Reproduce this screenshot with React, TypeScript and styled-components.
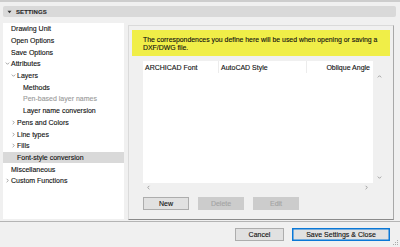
import styled, { createGlobalStyle } from "styled-components";

const GlobalStyle = createGlobalStyle`
    html, body {
        margin: 0;
        padding: 0;
        background: #f0f0f0;
    }
    body {
        font-family: "Liberation Sans", Arial, sans-serif;
        font-size: 7px;
        color: #111;
        -webkit-text-stroke: 0.12px currentColor;
    }
`;

const Window = styled.div`
    width: 400px;
    height: 247px;
    box-sizing: border-box;
    border-top: 2px solid #cdcdcd;
    background: #f0f0f0;
    display: flex;
    flex-direction: column;
    overflow: hidden;
`;

const Header = styled.div`
    margin: 4px 4px 0 3px;
    height: 11px;
    background: #d9d9d9;
    border-radius: 2px;
    display: flex;
    align-items: center;
    gap: 4px;
    padding-left: 4px;
    font-size: 6px;
    font-weight: bold;
    color: #2a2a2a;
    letter-spacing: 0.1px;
`;

const Body = styled.div`
    display: grid;
    grid-template-columns: 121px 266px;
    column-gap: 4px;
    margin: 6px 0 0 3px;
    height: 197px;
`;

const Tree = styled.div`
    background: #ffffff;
    height: 196px;
`;

const Row = styled.div<{ $level: number; $selected?: boolean; $muted?: boolean }>`
    height: 11.7px;
    display: flex;
    align-items: center;
    padding-left: ${(p) => 2 + p.$level * 6}px;
    background: ${(p) => (p.$selected ? "#d9d9d9" : "transparent")};
    color: ${(p) => (p.$muted ? "#9b9b9b" : "#111")};
    white-space: nowrap;
`;

const ArrowSlot = styled.span`
    width: 6px;
    height: 6px;
    display: flex;
    align-items: center;
    justify-content: flex-start;
`;

const Pane = styled.div`
    margin-top: 2px;
    height: 195px;
    box-sizing: border-box;
    border: 1px solid #dadada;
    border-right-color: #a8a8a8;
    border-bottom-color: #8a8a8a;
    padding: 4px 3px 0 3px;
    display: flex;
    flex-direction: column;
`;

const Note = styled.div`
    background: #f0ee48;
    height: 26px;
    box-sizing: border-box;
    padding: 6px 8px 0 11px;
    line-height: 7.5px;
    font-size: 6.9px;
    color: #111;
`;

const Grid = styled.div`
    margin: 5px 5px 0 11px;
    display: grid;
    grid-template-columns: 230px 12px;
    grid-template-rows: 122px 9px;
`;

const Table = styled.div`
    background: #ffffff;
`;

const HeadRow = styled.div`
    display: grid;
    grid-template-columns: 76px 88px 66px;
    height: 12px;
`;

const HeadCell = styled.div<{ $right?: boolean }>`
    display: flex;
    align-items: center;
    justify-content: ${(p) => (p.$right ? "flex-end" : "flex-start")};
    padding: 0 3px 0 2px;
    border-right: 1px solid #ececec;
    &:last-child {
        border-right: none;
    }
`;

const VScroll = styled.div`
    display: flex;
    flex-direction: column;
    justify-content: space-between;
    align-items: center;
    padding: 13px 0 3px;
`;

const HScroll = styled.div`
    display: flex;
    justify-content: space-between;
    align-items: center;
    padding: 0 4px 0 3px;
`;

const ButtonRow = styled.div`
    display: flex;
    gap: 9px;
    margin: 5px 0 0 11px;
`;

const Button = styled.button<{ $disabled?: boolean; $primary?: boolean; $w: number }>`
    width: ${(p) => p.$w}px;
    height: 13px;
    padding: 0;
    box-sizing: border-box;
    font-family: inherit;
    font-size: 7px;
    color: ${(p) => (p.$disabled ? "#a3a3a3" : "#111")};
    background: ${(p) => (p.$disabled ? "#cccccc" : "#e1e1e1")};
    border: 1px solid ${(p) => (p.$disabled ? "#cccccc" : p.$primary ? "#0a78d7" : "#adadad")};
    box-shadow: ${(p) => (p.$primary ? "inset 0 0 0 0.5px #0a78d7" : "none")};
`;

const Footer = styled.div`
    margin-top: 1px;
    border-top: 1px solid #b4b4b4;
    flex: 1;
    display: flex;
    justify-content: flex-end;
    align-items: flex-start;
    gap: 8px;
    padding: 6px 10px 0 0;
    position: relative;
`;

const Grip = styled.svg`
    position: absolute;
    right: 1px;
    bottom: 1px;
`;

type Arrow = "down" | "right";

const Chevron = ({ dir }: { dir: Arrow | "up" | "left" }) => {
    const d = {
        down: "M0.8 1.6 L2.5 3.3 L4.2 1.6",
        up: "M0.8 3.4 L2.5 1.7 L4.2 3.4",
        right: "M1.6 0.8 L3.3 2.5 L1.6 4.2",
        left: "M3.4 0.8 L1.7 2.5 L3.4 4.2",
    }[dir];
    return (
        <svg width="5" height="5" viewBox="0 0 5 5">
            <path d={d} fill="none" stroke="#9a9a9a" strokeWidth="0.9" />
        </svg>
    );
};

const items: { label: string; level: number; arrow?: Arrow; selected?: boolean; muted?: boolean }[] = [
    { label: "Drawing Unit", level: 0 },
    { label: "Open Options", level: 0 },
    { label: "Save Options", level: 0 },
    { label: "Attributes", level: 0, arrow: "down" },
    { label: "Layers", level: 1, arrow: "down" },
    { label: "Methods", level: 2 },
    { label: "Pen-based layer names", level: 2, muted: true },
    { label: "Layer name conversion", level: 2 },
    { label: "Pens and Colors", level: 1, arrow: "right" },
    { label: "Line types", level: 1, arrow: "right" },
    { label: "Fills", level: 1, arrow: "right" },
    { label: "Font-style conversion", level: 1, selected: true },
    { label: "Miscellaneous", level: 0 },
    { label: "Custom Functions", level: 0, arrow: "right" },
];

export function App() {
    return (
        <>
            <GlobalStyle />
            <Window>
                <Header>
                    <svg width="5" height="4" viewBox="0 0 5 4">
                        <path d="M0.5 0.8 L4.5 0.8 L2.5 3.3 Z" fill="#333" />
                    </svg>
                    SETTINGS
                </Header>
                <Body>
                    <Tree>
                        {items.map((it) => (
                            <Row key={it.label} $level={it.level} $selected={it.selected} $muted={it.muted}>
                                <ArrowSlot>{it.arrow && <Chevron dir={it.arrow} />}</ArrowSlot>
                                {it.label}
                            </Row>
                        ))}
                    </Tree>
                    <Pane>
                        <Note>
                            The correspondences you define here will be used when opening or saving a
                            <br />
                            DXF/DWG file.
                        </Note>
                        <Grid>
                            <Table>
                                <HeadRow>
                                    <HeadCell>ARCHICAD Font</HeadCell>
                                    <HeadCell>AutoCAD Style</HeadCell>
                                    <HeadCell $right>Oblique Angle</HeadCell>
                                </HeadRow>
                            </Table>
                            <VScroll>
                                <Chevron dir="up" />
                                <Chevron dir="down" />
                            </VScroll>
                            <HScroll>
                                <Chevron dir="left" />
                                <Chevron dir="right" />
                            </HScroll>
                        </Grid>
                        <ButtonRow>
                            <Button $w={46}>New</Button>
                            <Button $w={46} $disabled>Delete</Button>
                            <Button $w={46} $disabled>Edit</Button>
                        </ButtonRow>
                    </Pane>
                </Body>
                <Footer>
                    <Button $w={49}>Cancel</Button>
                    <Button $w={98} $primary>Save Settings &amp; Close</Button>
                    <Grip width="6" height="6" viewBox="0 0 6 6">
                        <rect x="4" y="0" width="1" height="1" fill="#aaa" />
                        <rect x="2" y="2" width="1" height="1" fill="#aaa" />
                        <rect x="4" y="2" width="1" height="1" fill="#aaa" />
                        <rect x="0" y="4" width="1" height="1" fill="#aaa" />
                        <rect x="2" y="4" width="1" height="1" fill="#aaa" />
                        <rect x="4" y="4" width="1" height="1" fill="#aaa" />
                    </Grip>
                </Footer>
            </Window>
        </>
    );
}

export default App;
